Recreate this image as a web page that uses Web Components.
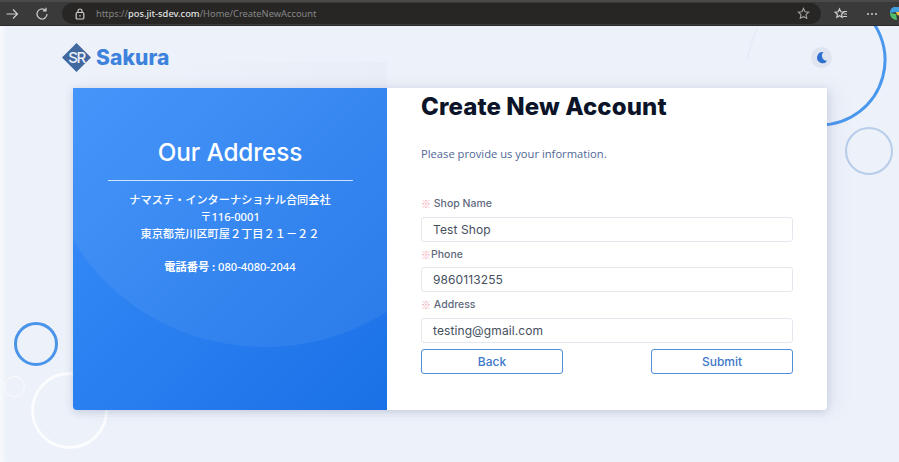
<!DOCTYPE html>
<html lang="en">
<head>
<meta charset="utf-8">
<title>Create New Account</title>
<style>
  html, body { margin: 0; height: 100%; }
  body { width: 899px; height: 462px; overflow: hidden; background: #edf1f9; font-family: Inter, "Noto Sans", sans-serif; }
</style>
</head>
<body>
<browser-bar url-host="pos.jit-sdev.com" url-path="/Home/CreateNewAccount"></browser-bar>
<account-page>
  <address-panel slot="left" heading="Our Address">
    <span>ナマステ・インターナショナル合同会社</span>
    <span>〒116-0001</span>
    <span>東京都荒川区町屋２丁目２１－２２</span>
    <span class="gap"><b>電話番号 :</b> 080-4080-2044</span>
  </address-panel>
  <account-form slot="right">
    <form-field label="Shop Name" value="Test Shop" spaced></form-field>
    <form-field label="Phone" value="9860113255"></form-field>
    <form-field label="Address" value="testing@gmail.com" spaced></form-field>
  </account-form>
</account-page>

<script>
class BrowserBar extends HTMLElement {
    connectedCallback() {
        let shadow = this.attachShadow({ mode: 'open' });
        shadow.innerHTML = `
            <style>
                :host { display: flex; align-items: center; height: 26px; box-sizing: border-box; background: #3a3a3a; border-top: 2px solid #4a4a4a; border-bottom: 1px solid #2b2b2b; padding-left: 5px; color: #cfcfcf; overflow: hidden; }
                svg { display: block; flex: none; fill: none; stroke: currentColor; stroke-width: 1.2; }
                .back { margin-right: 16px; }
                .url { display: flex; align-items: center; width: 759px; height: 21px; margin-right: 13px; box-sizing: border-box; padding: 0 11px 0 13px; background: #272625; border-radius: 11px; flex: none; }
                .text { margin-left: 11px; font: 9.3px "Noto Sans", sans-serif; color: #858585; white-space: nowrap; flex: 1; }
                .text b { font-weight: 500; color: #e0e0e0; }
                .star { color: #a2a2a2; }
                .edge { width: 12px; height: 14px; margin-left: 11px; }
            </style>
            <svg class="back" width="14" height="14" viewBox="0 0 14 14"><path d="M1.5 7h11M8 2.5 12.5 7 8 11.5"/></svg>
            <svg style="margin-right:13px" width="14" height="14" viewBox="0 0 14 14"><path d="M12 7a5 5 0 1 1-1.6-3.7M11 .8v3h-3"/></svg>
            <div class="url">
                <svg width="10" height="12" viewBox="0 0 10 12"><rect x="1.2" y="4.5" width="7.6" height="6.5" rx="1"/><path d="M3 4.5V3a2 2 0 0 1 4 0v1.5"/><path d="M5 7v1.5"/></svg>
                <span class="text">https://<b>${this.getAttribute('url-host')}</b>${this.getAttribute('url-path')}</span>
                <svg class="star" width="13" height="13" viewBox="0 0 14 14" stroke-width="1"><path d="m7 1.5 1.7 3.6 3.9.5-2.9 2.7.8 3.9L7 10.4l-3.5 1.8.8-3.9-2.9-2.7 3.9-.5z"/></svg>
            </div>
            <svg width="14" height="14" viewBox="0 0 14 14" style="margin-right:17px"><path d="m5.5 2 1.3 2.8 3 .4-2.2 2.1.6 3-2.7-1.5-2.7 1.5.6-3L1.2 5.2l3-.4zM9.5 4.5H13M10 7h3M9 9.5h4"/></svg>
            <svg width="14" height="14" viewBox="0 0 14 14"><g fill="currentColor" stroke="none"><circle cx="3" cy="7" r="1"/><circle cx="7" cy="7" r="1"/><circle cx="11" cy="7" r="1"/></g></svg>
            <svg class="edge" viewBox="0 0 12 14" style="stroke:none"><path fill="#3f9fe0" d="M0 6a6 6 0 0 1 12-1L6 5z"/><path fill="#f4c23c" d="M6 5h6v4L7 8z"/><path fill="#4fbf67" d="M0 6c0 4 3 7 7 7l-1-6z"/></svg>
        `;
    }
}

class AccountPage extends HTMLElement {
    connectedCallback() {
        let shadow = this.attachShadow({ mode: 'open' });
        shadow.innerHTML = `
            <style>
                :host { display: block; position: relative; height: 436px; overflow: hidden; background: linear-gradient(90deg, #f7f9fd 0, #edf1f9 7px); }
                .ring { position: absolute; box-sizing: border-box; border-radius: 50%; }
                .arc { position: absolute; left: 740px; top: -40px; }
                .soft { left: 845px; top: 101px; width: 48px; height: 48px; border: 2px solid #b7cdea; }
                .blue { left: 14px; top: 296px; width: 44px; height: 44px; border: 3px solid #4a94ea; }
                .tiny { left: 4px; top: 350px; width: 21px; height: 21px; border: 1.5px solid #fbfcfe; }
                .white { left: 31px; top: 346px; width: 77px; height: 77px; border: 3px solid #fbfcfe; }
                .veil { position: absolute; left: 150px; top: 36px; width: 237px; height: 40px; background: linear-gradient(100deg, #edf1f9 10%, #e8edf7); }
                header { position: relative; display: flex; align-items: center; justify-content: space-between; height: 62px; box-sizing: border-box; padding: 0 67px 0 62px; }
                .logo { display: flex; align-items: center; gap: 5px; font: 800 21px Inter, sans-serif; letter-spacing: 0.1px; color: #3d82dc; }
                .logo svg { display: block; }
                .moon { display: flex; align-items: center; justify-content: center; width: 21px; height: 21px; border-radius: 50%; background: #dfe5f0; }
                .card { position: relative; display: flex; width: 754px; height: 322px; margin-left: 73px; border-radius: 0 0 4px 4px; box-shadow: 0 2px 8px rgba(70, 90, 130, .22), 10px 0 18px rgba(110, 120, 170, .07); }
                ::slotted([slot=left]) { width: 314px; flex: none; }
                ::slotted([slot=right]) { flex: 1; }
            </style>
            <svg class="arc" width="150" height="170" viewBox="740 -40 150 170" fill="none">
                <path d="M853 -22A65 65 0 0 1 820 99" stroke="#4a97ee" stroke-width="3"/>
                <path d="M747 34Q751 16 758 0" stroke="#e6ebf5" stroke-width="1.5"/>
            </svg>
            <div class="ring soft"></div>
            <div class="ring blue"></div>
            <div class="ring tiny"></div>
            <div class="ring white"></div>
            <div class="veil"></div>
            <header>
                <div class="logo">
                    <svg width="29" height="29" viewBox="0 0 29 29">
                        <path fill="#41699f" d="M14.5 0 29 14.5 14.5 29 0 14.5z"/>
                        <text x="14.5" y="19.5" text-anchor="middle" font-family="Inter, sans-serif" font-size="15" font-weight="500" fill="#edf1f9" letter-spacing="-1.5">SR</text>
                    </svg>
                    <span>Sakura</span>
                </div>
                <div class="moon">
                    <svg width="13" height="13" viewBox="0 0 13 13"><path fill="#2f6fd0" d="M8.5 1A5.6 5.6 0 1 0 12.4 9.6 5 5 0 0 1 8.5 1z"/></svg>
                </div>
            </header>
            <div class="card">
                <slot name="left"></slot>
                <slot name="right"></slot>
            </div>
        `;
    }
}

class AddressPanel extends HTMLElement {
    connectedCallback() {
        let shadow = this.attachShadow({ mode: 'open' });
        shadow.innerHTML = `
            <style>
                :host { display: block; position: relative; overflow: hidden; box-sizing: border-box; padding-top: 49px; height: 322px; background: linear-gradient(135deg, #3b8ffb 0%, #1a70e6 100%); border-radius: 0 0 0 4px; color: #fff; text-align: center; }
                .wave { position: absolute; left: -27px; top: -155px; width: 438px; height: 414px; border-radius: 50%; background: rgba(255, 255, 255, .06); }
                .inner { position: relative; display: flex; flex-direction: column; align-items: center; }
                h2 { margin: 0; font: 500 24.3px/30px Inter, sans-serif; letter-spacing: -0.1px; }
                hr { width: 245px; height: 1px; margin: 13px 0 10px; border: 0; background: rgba(255, 255, 255, .75); }
                .lines { display: flex; flex-direction: column; font: 500 11.2px/17px "Noto Sans", "Noto Sans CJK JP", sans-serif; }
                ::slotted(.gap) { margin-top: 16px; }
            </style>
            <div class="wave"></div>
            <div class="inner">
                <h2>${this.getAttribute('heading')}</h2>
                <hr>
                <div class="lines"><slot></slot></div>
            </div>
        `;
    }
}

class AccountForm extends HTMLElement {
    connectedCallback() {
        let shadow = this.attachShadow({ mode: 'open' });
        shadow.innerHTML = `
            <style>
                :host { display: block; box-sizing: border-box; padding: 0 34px 0 34px; background: #fff; border-radius: 0 0 4px 0; }
                h1 { margin: 0; padding-top: 4px; font: 800 24px/30px Inter, sans-serif; letter-spacing: 0.1px; color: #0b1428; }
                p { margin: 24px 0 29px; font: 11.2px/16px "Open Sans", sans-serif; color: #4f6796; }
                .buttons { display: flex; justify-content: space-between; margin-top: 6px; }
                button { width: 142px; height: 25px; padding: 0; background: #fff; border: 1px solid #4d8fd9; border-radius: 3px; font: 500 12px Inter, sans-serif; color: #3d78c9; }
            </style>
            <h1>Create New Account</h1>
            <p>Please provide us your information.</p>
            <slot></slot>
            <div class="buttons"><button>Back</button><button>Submit</button></div>
        `;
    }
}

class FormField extends HTMLElement {
    connectedCallback() {
        let shadow = this.attachShadow({ mode: 'open' });
        let gap = this.hasAttribute('spaced') ? ' ' : '';
        shadow.innerHTML = `
            <style>
                :host { display: block; }
                label { display: flex; height: 25.5px; align-items: center; font: 500 10.5px Inter, sans-serif; color: #5f6a7c; white-space: pre; }
                i { font: normal 10px "Noto Sans CJK JP", sans-serif; color: #f2a3ad; }
                .box { display: flex; align-items: center; height: 25px; box-sizing: border-box; padding-left: 11px; border: 1px solid #e3e7ee; border-radius: 3px; font: 12px Inter, sans-serif; letter-spacing: 0.1px; color: #464f5d; }
            </style>
            <label><i>※</i>${gap}${this.getAttribute('label')}</label>
            <div class="box">${this.getAttribute('value')}</div>
        `;
    }
}

customElements.define('browser-bar', BrowserBar);
customElements.define('account-page', AccountPage);
customElements.define('address-panel', AddressPanel);
customElements.define('account-form', AccountForm);
customElements.define('form-field', FormField);
</script>
</body>
</html>
